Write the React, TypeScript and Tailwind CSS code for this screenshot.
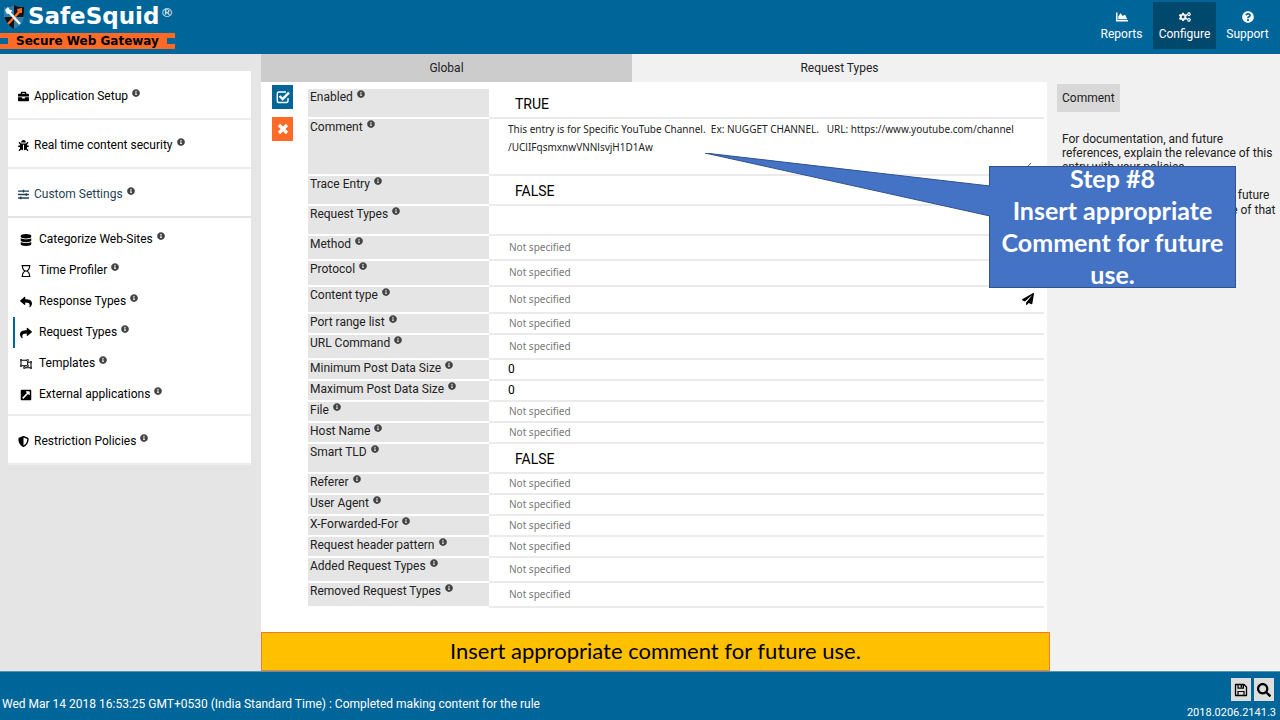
import type { ReactNode } from "react";
import type { IconType } from "react-icons";
import {
  FaBriefcase,
  FaBug,
  FaChartArea,
  FaCogs,
  FaDatabase,
  FaExternalLinkSquareAlt,
  FaInfoCircle,
  FaPaperPlane,
  FaQuestionCircle,
  FaRegHourglass,
  FaRegObjectUngroup,
  FaReply,
  FaSearch,
  FaShare,
  FaShieldAlt,
  FaSlidersH,
} from "react-icons/fa";

type Entry = { label: string; icon: IconType; active?: boolean };

const subItems: Entry[] = [
  { label: "Categorize Web-Sites", icon: FaDatabase },
  { label: "Time Profiler", icon: FaRegHourglass },
  { label: "Response Types", icon: FaReply },
  { label: "Request Types", icon: FaShare, active: true },
  { label: "Templates", icon: FaRegObjectUngroup },
  { label: "External applications", icon: FaExternalLinkSquareAlt },
];

const unset = <span className="pl-px font-['Noto_Sans',sans-serif] text-[10px] text-[#777]">Not specified</span>;
const flag = (value: string) => <span className="block pt-1 pl-[7px] text-[14px] text-black">{value}</span>;
const amount = (value: string) => <span className="text-black">{value}</span>;

type Row = { label: string; height: string; value: ReactNode };

const SMALL = "h-[21px]";
const MEDIUM = "h-[25px]";
const LARGE = "h-[30px]";

const rows: Row[] = [
  { label: "Enabled", height: LARGE, value: flag("TRUE") },
  {
    label: "Comment",
    height: "h-[57px]",
    value: (
      <textarea
        id="comment"
        className="block h-[51px] w-full max-w-[524px] overflow-hidden bg-transparent font-['Noto_Sans',sans-serif] text-[10px] leading-[18px] text-[#222] outline-none"
        defaultValue={
          "This entry is for Specific YouTube Channel.  Ex: NUGGET CHANNEL.   URL: https://www.youtube.com/channel\n/UClIFqsmxnwVNNlsvjH1D1Aw"
        }
      />
    ),
  },
  { label: "Trace Entry", height: LARGE, value: flag("FALSE") },
  { label: "Request Types", height: LARGE, value: null },
  { label: "Method", height: MEDIUM, value: unset },
  { label: "Protocol", height: "h-[26px]", value: unset },
  {
    label: "Content type",
    height: "h-[27px]",
    value: (
      <div className="flex items-center justify-between pr-2.5">
        {unset}
        <button type="button" aria-label="Send">
          <FaPaperPlane className="size-3 text-black" />
        </button>
      </div>
    ),
  },
  { label: "Port range list", height: SMALL, value: unset },
  { label: "URL Command", height: MEDIUM, value: unset },
  { label: "Minimum Post Data Size", height: SMALL, value: amount("0") },
  { label: "Maximum Post Data Size", height: SMALL, value: amount("0") },
  { label: "File", height: SMALL, value: unset },
  { label: "Host Name", height: SMALL, value: unset },
  { label: "Smart TLD", height: LARGE, value: flag("FALSE") },
  { label: "Referer", height: SMALL, value: unset },
  { label: "User Agent", height: SMALL, value: unset },
  { label: "X-Forwarded-For", height: SMALL, value: unset },
  { label: "Request header pattern", height: SMALL, value: unset },
  { label: "Added Request Types", height: MEDIUM, value: unset },
  { label: "Removed Request Types", height: MEDIUM, value: unset },
];

function Info() {
  return <FaInfoCircle className="mb-2 ml-1 inline-block size-2 align-middle text-[#444]" />;
}

function CheckIcon() {
  return (
    <svg viewBox="0 0 14 14" className="size-3.5" fill="none" stroke="currentColor" aria-hidden="true">
      <path d="M12 8V11Q12 12.5 10.5 12.5H3Q1.3 12.5 1.3 11V3.5Q1.3 2 3 2H10" strokeWidth="1.4" />
      <path d="M3.6 6L6.6 9L13 2.6" strokeWidth="2.4" />
    </svg>
  );
}

function CrossIcon() {
  return (
    <svg viewBox="0 0 12 12" className="size-3" fill="none" stroke="currentColor" aria-hidden="true">
      <path d="M2 2L10 10M10 2L2 10" strokeWidth="3.2" />
    </svg>
  );
}

function FloppyIcon() {
  return (
    <svg viewBox="0 0 14 14" className="size-3.5" fill="none" stroke="currentColor" aria-hidden="true">
      <path d="M1.5 1.5H10L12.5 4V12.5H1.5Z" strokeWidth="1.3" strokeLinejoin="round" />
      <path d="M4 1.5V5.2H9.4V1.5M4 12.5V8.5H10V12.5" strokeWidth="1.2" />
      <path d="M7.4 2V4.6" strokeWidth="1.6" />
    </svg>
  );
}

function Logo() {
  return (
    <a href="#home" className="block w-[175px] font-['DejaVu_Sans',sans-serif] font-bold">
      <span className="flex h-[33px] items-center pl-0.5 text-white">
        <svg viewBox="0 0 22 26" className="mr-0.5 h-[26px] w-6" aria-hidden="true">
          <path d="M1 3Q6 4 11 1Q16 4 21 3Q22 19 11 25Q0 19 1 3Z" fill="#111" />
          <path d="M1 3Q6 4 11 1V13H1Z" fill="#2f7fae" />
          <path d="M11 13H21Q20 21 11 25Z" fill="#2f7fae" />
          <path d="M18 6L5 20" stroke="#ff6a26" strokeWidth="2.4" />
          <path d="M14 5L19 4L19 9L15 9Z" fill="#ff6a26" />
          <path d="M4 6L17 20" stroke="#fff" strokeWidth="2.4" />
          <path d="M2 6L5 3L7 6L9 6L8 9L4 10Z" fill="#fff" />
        </svg>
        <span className="text-[23px] leading-none">SafeSquid</span>
        <span className="mb-2 ml-px text-[13px] leading-none font-normal">®</span>
      </span>
      <span className="flex h-4 items-center bg-[#ff6a26]">
        <span className="h-1.5 w-2 bg-[#006699]" />
        <span className="flex-1 text-center text-[12px] leading-none text-black">Secure Web Gateway</span>
        <span className="h-1.5 w-2 bg-[#006699]" />
      </span>
    </a>
  );
}

function TopLink({ label, icon: Icon, active }: Entry) {
  return (
    <a
      href={"#" + label.toLowerCase()}
      className={
        active
          ? "flex h-[47px] w-[63px] flex-col items-center gap-0.5 bg-[#00486c] pt-[9px]"
          : "flex h-[47px] w-[63px] flex-col items-center gap-0.5 pt-[9px]"
      }
    >
      <Icon className="size-3" />
      <span className="leading-[18px]">{label}</span>
    </a>
  );
}

function Card({ label, icon: Icon, active }: Entry) {
  return (
    <a
      href={"#" + label}
      className={
        active
          ? "flex h-[49px] items-center border-b-2 border-[#e3e3e3] bg-white pt-1 pl-2.5 text-[#1f3f55]"
          : "flex h-[49px] items-center border-b-2 border-[#ececec] bg-white pt-1 pl-2.5"
      }
    >
      <Icon className="mr-[5px] size-[11px]" />
      <span>
        {label}
        <Info />
      </span>
    </a>
  );
}

export default function App() {
  return (
    <div className="flex min-h-screen flex-col bg-[#f1f1f1] font-['Roboto',sans-serif] text-[12px] leading-4 text-[#222]">
      <header className="flex h-[54px] justify-between bg-[#006699] text-white">
        <Logo />
        <nav className="flex pt-0.5 pr-px">
          <TopLink label="Reports" icon={FaChartArea} />
          <TopLink label="Configure" icon={FaCogs} active />
          <TopLink label="Support" icon={FaQuestionCircle} />
        </nav>
      </header>

      <div className="relative flex flex-1">
        <nav className="w-[261px] shrink-0 bg-[#e5e5e5] pt-[17px] pr-2.5 pl-2 text-black">
          <Card label="Application Setup" icon={FaBriefcase} />
          <Card label="Real time content security" icon={FaBug} />
          <Card label="Custom Settings" icon={FaSlidersH} active />
          <ul className="border-b-2 border-[#ececec] bg-white pt-1.5 pb-1 pl-[5px]">
            {subItems.map(({ label, icon: Icon, active }) => (
              <li key={label}>
                <a
                  href={"#" + label}
                  className={
                    active
                      ? "flex h-[31px] items-center border-l-2 border-[#006699] pl-[5px]"
                      : "flex h-[31px] items-center border-l-2 border-transparent pl-[5px]"
                  }
                >
                  <Icon className="mr-[7px] size-3" />
                  <span>
                    {label}
                    <Info />
                  </span>
                </a>
              </li>
            ))}
          </ul>
          <Card label="Restriction Policies" icon={FaShieldAlt} />
        </nav>

        <main className="relative flex min-w-0 flex-1 flex-col bg-white pb-[60px]">
          <div className="flex h-7 bg-[#f1f1f1]" role="tablist">
            <button type="button" role="tab" aria-selected="true" className="w-[371px] bg-[#cccccc]">
              Global
            </button>
            <button type="button" role="tab" aria-selected="false" className="flex-1">
              Request Types
            </button>
          </div>
          <div className="flex pt-[3px] pr-[3px] pl-[11px]">
            <div className="flex w-9 shrink-0 flex-col gap-2">
              <button
                type="button"
                aria-label="Save"
                className="flex h-6 w-[21px] items-center justify-center bg-[#006699] text-white"
              >
                <CheckIcon />
              </button>
              <button
                type="button"
                aria-label="Cancel"
                className="flex h-6 w-[21px] items-center justify-center bg-[#ff6a26] text-white"
              >
                <CrossIcon />
              </button>
            </div>
            <table className="mt-0.5 w-full table-fixed border-collapse">
              <tbody>
                {rows.map((row) => (
                  <tr key={row.label} className={row.height + " border-b-2 border-[#ebebeb]"}>
                    <th
                      scope="row"
                      className="w-[181px] border-y-2 border-white bg-[#e5e5e5] bg-clip-padding p-0 pl-0.5 text-left align-top font-normal"
                    >
                      <label htmlFor={row.label === "Comment" ? "comment" : undefined}>
                        {row.label}
                        <Info />
                      </label>
                    </th>
                    <td className="p-0 pb-0.5 pl-[19px]">{row.value}</td>
                  </tr>
                ))}
              </tbody>
            </table>
          </div>
          <p className="absolute -right-[3px] bottom-0 left-0 flex h-[39px] items-center justify-center border border-[#ed7d31] bg-[#ffc000] pb-0.5 font-['Lato',sans-serif] text-[22px] text-black">
            Insert appropriate comment for future use.
          </p>
        </main>

        <aside className="w-[233px] shrink-0 pt-[30px] pl-2.5">
          <h2 className="inline-block bg-[#d8d8d8] px-[5px] py-1.5">Comment</h2>
          <p className="mt-5 pl-[5px] leading-[14px] whitespace-nowrap">
            For documentation, and future
            <br />
            references, explain the relevance of this
            <br />
            entry with your policies.
          </p>
          <p className="mt-3.5 pl-[5px] leading-[15px] whitespace-nowrap">
            That is, by reading the policies, a future
            <br />
            user can understand the purpose of that
            <br />
            entry.
          </p>
        </aside>

        <div className="absolute top-28 right-11 w-[247px]">
          <p className="flex h-[122px] items-center justify-center border border-[#2f528f] bg-[#4472c4] pb-0.5 text-center font-['Lato',sans-serif] text-[25px] leading-8 font-bold text-white">
            <span>
              Step #8
              <br />
              Insert appropriate
              <br />
              Comment for future
              <br />
              use.
            </span>
          </p>
          <svg viewBox="0 0 286 64" className="absolute -top-[13px] right-[246px] h-16 w-[286px]" aria-hidden="true">
            <path d="M286 33L1 0L286 63Z" fill="#4472c4" />
            <path d="M286 33L1 0L286 63" fill="none" stroke="#2f528f" />
          </svg>
        </div>
      </div>

      <footer className="flex h-[49px] items-end justify-between border-t border-[#5a94b5] bg-[#006699] text-white">
        <p className="pb-2 pl-0.5">
          Wed Mar 14 2018 16:53:25 GMT+0530 (India Standard Time) : Completed making content for the rule
        </p>
        <div className="flex flex-col items-end pr-1">
          <div className="flex gap-[3px] pr-0.5 text-black">
            <button type="button" aria-label="Save rule" className="flex h-[23px] w-5 items-center justify-center bg-[#dddddd]">
              <FloppyIcon />
            </button>
            <button type="button" aria-label="Search" className="flex h-[23px] w-5 items-center justify-center bg-[#dddddd]">
              <FaSearch className="size-3.5" />
            </button>
          </div>
          <span className="pt-1 text-[11px] leading-[15px]">2018.0206.2141.3</span>
        </div>
      </footer>
    </div>
  );
}
